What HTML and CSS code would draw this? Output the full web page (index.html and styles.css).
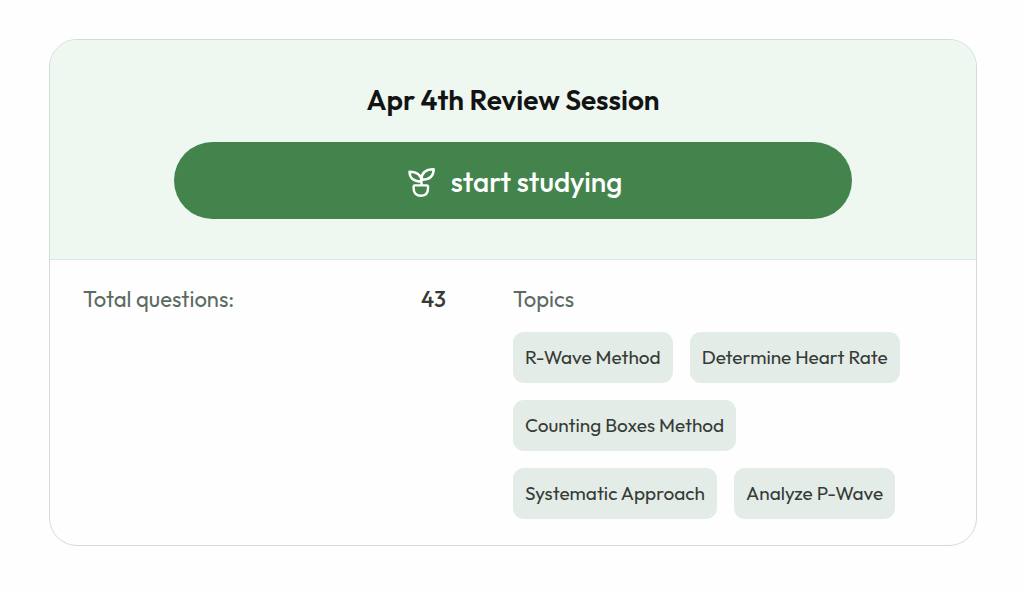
FILE: index.html
```html
<!DOCTYPE html>
<html lang="en">
<head>
<meta charset="utf-8">
<meta name="viewport" content="width=device-width, initial-scale=1">
<title>Review Session</title>
<link rel="stylesheet" href="styles.css">
</head>
<body>
<main class="card">
  <header class="card-header">
    <h1 class="title">Apr 4th Review Session</h1>
    <button class="start" type="button">
      <svg class="sprout" viewBox="0 0 27 30" aria-hidden="true">
        <path d="M13.500 18.400V13M13.500 12.800C13.500 6 17.500 2.200 25.700 2.200C25.700 9 21.500 12.800 13.500 12.800ZM13.500 14.500C13.500 8.500 9.500 4.700 1.500 4.700C1.500 11 5.500 14.500 13.500 14.500ZM6.800 18.400H18.800Q20 18.400 20 19.600V21.500C20 26 17.500 28.700 13 28.700C8.500 28.700 5.600 26 5.600 21.500V19.600Q5.600 18.400 6.800 18.400Z"/>
      </svg>
      <span>start studying</span>
    </button>
  </header>
  <div class="details">
    <dl class="stats">
      <dt>Total questions:</dt>
      <dd>43</dd>
    </dl>
    <section class="topics">
      <h2 class="label">Topics</h2>
      <ul class="chips">
        <li class="chip">R-Wave Method</li>
        <li class="chip">Determine Heart Rate</li>
        <li class="chip">Counting Boxes Method</li>
        <li class="chip">Systematic Approach</li>
        <li class="chip">Analyze P-Wave</li>
      </ul>
    </section>
  </div>
</main>
</body>
</html>
```
FILE: styles.css
```css
* {
  box-sizing: border-box;
}

body {
  margin: 0;
  padding: 39px 47px 43px 49px;
  background: #fefefe;
  color: #363b37;
  font-family: Outfit, Lato, "Liberation Sans", sans-serif;
}

.card {
  overflow: hidden;
  border: 1px solid #d0ddd7;
  border-radius: 28px;
}

.card-header {
  display: flex;
  flex-direction: column;
  gap: 25px;
  padding: 42px 124px 40px;
  border-bottom: 1px solid #dde7e2;
  background: #eef7f0;
}

.title {
  margin: 0;
  color: #111412;
  font-size: 28px;
  font-weight: 600;
  line-height: 35px;
  text-align: center;
}

.start {
  display: flex;
  align-items: center;
  justify-content: center;
  gap: 16px;
  padding: 22px 20px 20px 24px;
  border: 0;
  border-radius: 39px;
  background: #43844d;
  color: #fff;
  font: inherit;
  font-size: 28px;
  font-weight: 500;
  line-height: 35px;
}

.sprout {
  width: 27px;
  height: 30px;
  fill: none;
  stroke: #fff;
  stroke-width: 2.400;
  stroke-linecap: round;
  stroke-linejoin: round;
}

.details {
  display: grid;
  grid-template-columns: 1fr 1fr;
  padding: 25px 33px 26px;
  font-size: 22px;
  line-height: 28px;
}

.stats {
  display: flex;
  justify-content: space-between;
  margin: 0;
  padding-right: 67px;
  color: #5b6b61;
}

.stats dd {
  margin: 0;
  color: #363b37;
  font-weight: 500;
}

.label {
  margin: 0 0 19px;
  color: #5b6b61;
  font-size: 22px;
  font-weight: 400;
}

.chips {
  display: flex;
  flex-wrap: wrap;
  gap: 17px;
  margin: 0;
  padding: 0;
  list-style: none;
}

.chip {
  padding: 12px;
  border-radius: 11px;
  background: #e3ece7;
  font-size: 19px;
  line-height: 27px;
}
```
